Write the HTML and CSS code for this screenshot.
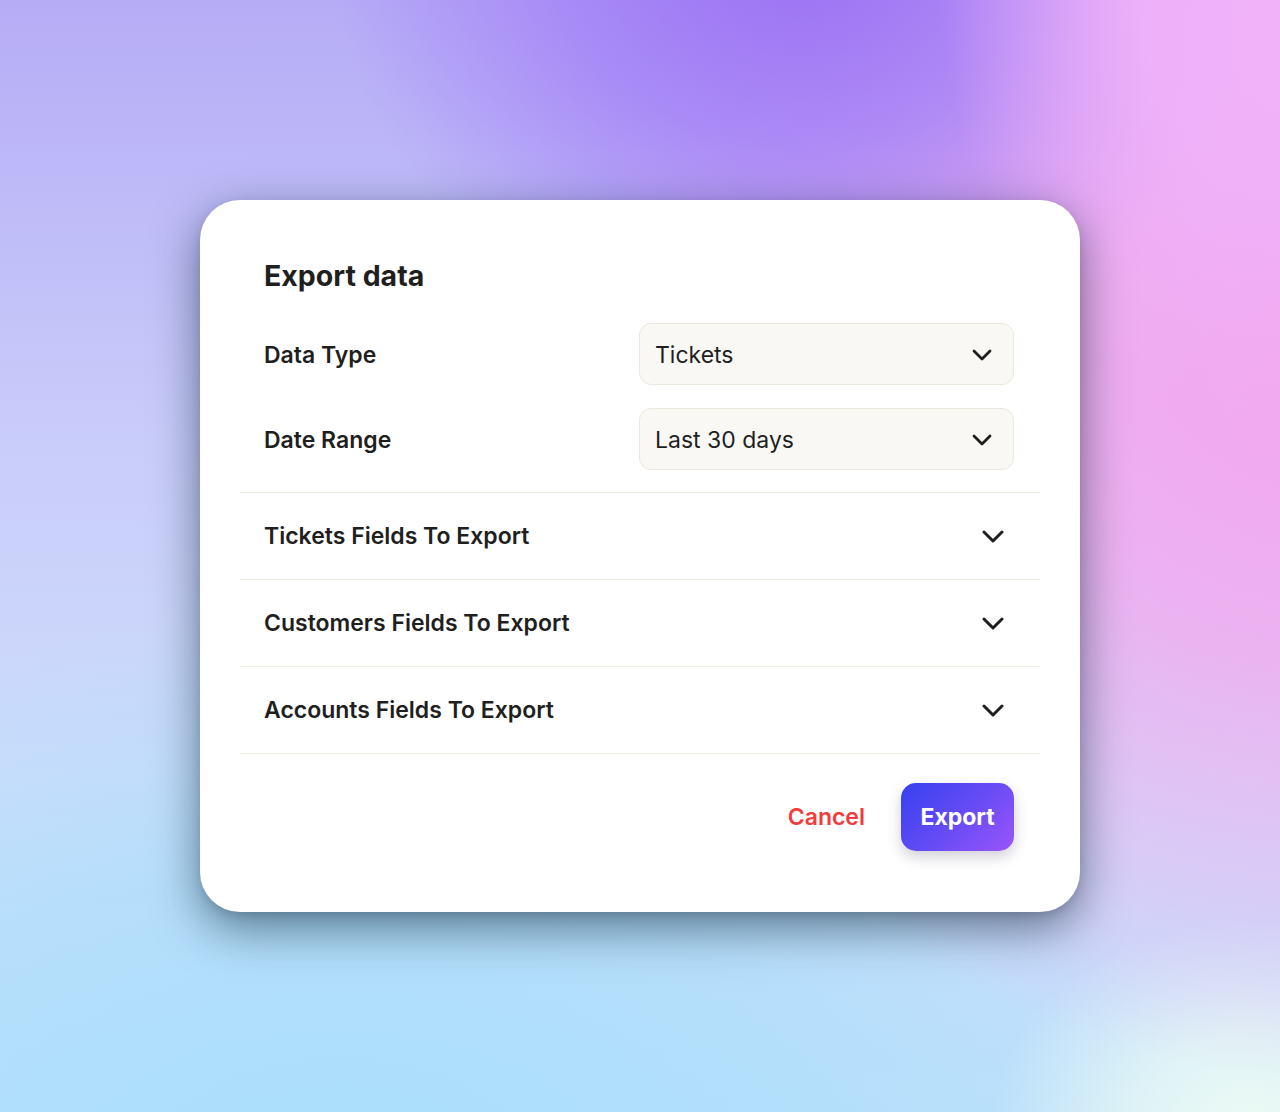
FILE: index.html
```html
<!DOCTYPE html>
<html lang="en">
<head>
<meta charset="utf-8">
<title>Export data</title>
<link rel="stylesheet" href="styles.css">
</head>
<body>
<div class="dialog">
  <h1 class="title">Export data</h1>
  <div class="fields">
    <div class="field">
      <span class="label">Data Type</span>
      <div class="select">
        <span>Tickets</span>
        <svg class="chev" width="20" height="12" viewBox="0 0 20 12"><path d="M2 2 L10 10 L18 2" fill="none" stroke="#1f1f1f" stroke-width="2.8" stroke-linecap="round" stroke-linejoin="round"/></svg>
      </div>
    </div>
    <div class="field">
      <span class="label">Date Range</span>
      <div class="select">
        <span>Last 30 days</span>
        <svg class="chev" width="20" height="12" viewBox="0 0 20 12"><path d="M2 2 L10 10 L18 2" fill="none" stroke="#1f1f1f" stroke-width="2.8" stroke-linecap="round" stroke-linejoin="round"/></svg>
      </div>
    </div>
  </div>
  <div class="accordion">
    <div class="acc-row">
      <span class="acc-title">Tickets Fields To Export</span>
      <svg class="chev" width="22" height="13" viewBox="0 0 22 13"><path d="M2 2 L11 11 L20 2" fill="none" stroke="#1f1f1f" stroke-width="3" stroke-linecap="round" stroke-linejoin="round"/></svg>
    </div>
    <div class="acc-row">
      <span class="acc-title">Customers Fields To Export</span>
      <svg class="chev" width="22" height="13" viewBox="0 0 22 13"><path d="M2 2 L11 11 L20 2" fill="none" stroke="#1f1f1f" stroke-width="3" stroke-linecap="round" stroke-linejoin="round"/></svg>
    </div>
    <div class="acc-row">
      <span class="acc-title">Accounts Fields To Export</span>
      <svg class="chev" width="22" height="13" viewBox="0 0 22 13"><path d="M2 2 L11 11 L20 2" fill="none" stroke="#1f1f1f" stroke-width="3" stroke-linecap="round" stroke-linejoin="round"/></svg>
    </div>
  </div>
  <div class="actions">
    <button class="btn-cancel" type="button">Cancel</button>
    <button class="btn-export" type="button">Export</button>
  </div>
</div>
</body>
</html>
```

FILE: styles.css
```css
html, body {
  margin: 0;
  padding: 0;
}
body {
  width: 1280px;
  height: 1112px;
  overflow: hidden;
  font-family: Inter, "Noto Sans", "Liberation Sans", sans-serif;
  color: #1f1f1f;
  display: flex;
  justify-content: center;
  align-items: flex-start;
  background:
    radial-gradient(ellipse 360px 460px at 1300px -20px, #f1b2fa 0%, rgba(240,178,250,0.9) 45%, rgba(235,190,248,0) 100%),
    radial-gradient(ellipse 470px 420px at 800px -60px, #9a6ff4 0%, rgba(162,126,246,0.75) 50%, rgba(170,140,246,0) 100%),
    radial-gradient(ellipse 740px 760px at 1330px 320px, #f4a6ec 0%, rgba(243,170,238,0.85) 40%, rgba(236,190,246,0) 100%),
    radial-gradient(ellipse 260px 210px at 1250px 1130px, #ecfbf4 0%, rgba(236,251,244,0.7) 45%, rgba(236,251,244,0) 100%),
    radial-gradient(ellipse 860px 560px at 340px 1170px, #aadffb 0%, rgba(170,223,251,0.6) 55%, rgba(170,223,251,0) 100%),
    linear-gradient(180deg, #b6acf6 0%, #c9cdfa 40%, #cddcfb 70%, #c0e0fb 100%);
}
.dialog {
  box-sizing: border-box;
  margin-top: 200px;
  width: 880px;
  height: 712px;
  background: #ffffff;
  border-radius: 40px;
  box-shadow: 0 16px 48px rgba(10, 35, 55, 0.55), 0 4px 10px rgba(0, 0, 0, 0.1);
  padding: 58px 40px 0;
  display: flex;
  flex-direction: column;
}
.title {
  margin: 0;
  padding: 1px 26px 0 24px;
  font-size: 28.5px;
  line-height: 34px;
  font-weight: 700;
}
.fields {
  margin-top: 30px;
  padding: 0 26px 22px 22px;
  display: flex;
  flex-direction: column;
  gap: 23px;
}
.field {
  display: grid;
  grid-template-columns: 1fr 1fr;
  align-items: center;
}
.label {
  font-size: 23px;
  font-weight: 600;
  padding: 2px 0 0 2px;
}
.select {
  box-sizing: border-box;
  height: 62px;
  background: #f9f8f5;
  border: 1px solid #ece8de;
  border-radius: 12px;
  padding: 2px 21px 0 15px;
  display: flex;
  align-items: center;
  justify-content: space-between;
  font-size: 23px;
  font-weight: 400;
  margin-left: 1px;
}
.chev {
  display: block;
  flex: none;
}
.accordion {
  display: flex;
  flex-direction: column;
}
.acc-row {
  box-sizing: border-box;
  height: 87px;
  border-top: 1px solid #eeeadf;
  display: flex;
  align-items: center;
  justify-content: space-between;
  padding: 0 36px 0 24px;
}
.acc-row:last-child {
  border-bottom: 1px solid #eeeadf;
  height: 88px;
}
.acc-title {
  font-size: 23px;
  font-weight: 600;
}
.actions {
  margin-top: 29px;
  padding: 0 26px 0 22px;
  display: flex;
  justify-content: flex-end;
  align-items: center;
  gap: 36px;
}
.btn-cancel {
  border: none;
  background: none;
  padding: 0;
  font-family: inherit;
  font-size: 23px;
  font-weight: 600;
  color: #f23b3b;
}
.btn-export {
  border: none;
  font-family: inherit;
  font-size: 23px;
  font-weight: 700;
  color: #ffffff;
  height: 68px;
  width: 113px;
  border-radius: 15px;
  background: linear-gradient(135deg, #3541ee 0%, #6a4cf6 55%, #9b55fa 100%);
  box-shadow: 0 6px 14px rgba(40, 40, 80, 0.22);
}
```
